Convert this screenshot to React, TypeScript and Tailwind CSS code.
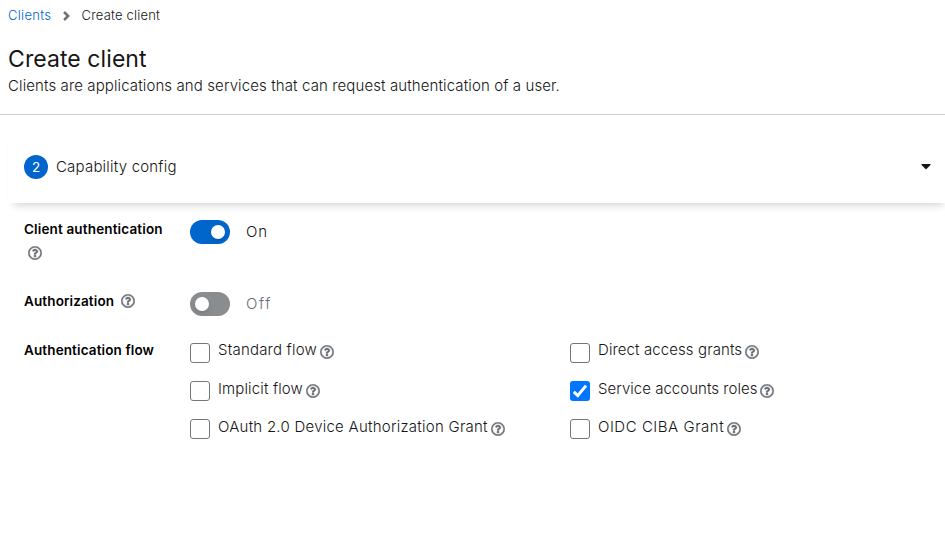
import { FaAngleRight, FaCaretDown, FaRegQuestionCircle } from "react-icons/fa";

function Help({ className = "" }: { className?: string }) {
  return (
    <FaRegQuestionCircle
      className={`block h-3.5 w-3.5 shrink-0 stroke-[#6a6e73] stroke-[14] text-[#6a6e73] ${className}`}
    />
  );
}

function Toggle({ on }: { on: boolean }) {
  return (
    <span
      className={`flex h-6 w-10 items-center rounded-full px-[5px] ${
        on ? "justify-end bg-[#0066cc]" : "justify-start bg-[#8a8d90]"
      }`}
    >
      <span className="h-3.5 w-3.5 rounded-full bg-white shadow-md" />
    </span>
  );
}

type OptionProps = { label: string; tracking: string; offset?: string; checked?: boolean };

function Option({ label, tracking, offset = "pt-px", checked = false }: OptionProps) {
  return (
    <label className="flex h-[38px] items-start">
      <span
        className={`mt-0.5 flex h-5 w-5 shrink-0 items-center justify-center rounded-[3px] ${
          checked ? "bg-[#0075ff]" : "border border-[#767676] bg-white"
        }`}
      >
        {checked && (
          <svg viewBox="0 0 20 20" className="h-5 w-5" fill="none" stroke="white" strokeWidth="3">
            <path d="M3.8 10.8 7.8 14.6 16 4.6" />
          </svg>
        )}
      </span>
      <span className={`ml-2 flex items-start ${offset}`}>
        <span className={`whitespace-nowrap text-[15px] leading-[18px] ${tracking}`}>{label}</span>
        <Help className="ml-[3px] mt-1" />
      </span>
    </label>
  );
}

export default function App() {
  return (
    <main className="h-[533px] w-full overflow-hidden bg-white font-['Inter',sans-serif] font-light text-[#151515]">
      <header className="h-[115px] border-b border-[#d2d2d2] pl-2 pt-[5px]">
        <nav className="flex h-[21px] items-center text-[13px] font-[350] leading-[21px] tracking-[0.2px]">
          <a className="w-[54.5px] tracking-[0.3px] text-[#0066cc]">Clients</a>
          <FaAngleRight className="mr-[12px] h-3.5 w-[7px] stroke-[#6a6e73] stroke-[20] text-[#6a6e73]" />
          <span>Create client</span>
        </nav>
        <h1 className="mt-[17px] h-[31px] text-[23px] font-normal leading-[33px] tracking-[0.08px]">Create client</h1>
        <p className="h-6 text-[15px] leading-6 tracking-[0.11px]">
          Clients are applications and services that can request authentication of a user.
        </p>
      </header>

      <section className="-mr-1 ml-2 mt-[15px] flex h-[73px] items-start bg-white pl-4 pr-[18px] pt-[25px] shadow-[0_8px_8px_-6px_rgba(3,3,3,0.18)]">
        <span className="flex h-6 w-6 items-center justify-center rounded-full bg-[#0066cc] text-[13.5px] font-normal text-white">
          2
        </span>
        <span className="ml-2 text-[15px] leading-6 tracking-[0.2px]">Capability config</span>
        <FaCaretDown className="ml-auto mt-[3px] h-4 w-2.5" />
      </section>

      <form className="pl-6 pt-[17px]">
        <div className="flex h-[72px] items-start">
          <div className="w-[166px] text-[13.5px] font-[570] leading-[19px] tracking-[0.15px] text-black">
            <div>Client authentication</div>
            <Help className="ml-1 mt-[7px]" />
          </div>
          <Toggle on={true} />
          <span className="ml-4 text-[15px] leading-6 tracking-[0.9px]">On</span>
        </div>
        <div className="flex h-[49px] items-start">
          <div className="flex w-[166px] items-start text-[13.5px] font-[570] leading-[19px] tracking-[0.12px] text-black">
            <span className="w-[89px]">Authorization</span>
            <Help className="ml-2 mt-0.5" />
          </div>
          <Toggle on={false} />
          <span className="ml-4 text-[15px] leading-6 tracking-[1.6px] text-[#6a6e73]">Off</span>
        </div>
        <div className="flex items-start">
          <div className="w-[166px] shrink-0 text-[13.5px] font-[570] leading-[19px] tracking-[0.12px] text-black">
            Authentication flow
          </div>
          <div className="grid shrink-0 grid-cols-[380px_375px]">
            <Option label="Standard flow" tracking="tracking-[0.2px]" offset="pt-0" />
            <Option label="Direct access grants" tracking="tracking-[0.1px]" offset="pt-0" />
            <Option label="Implicit flow" tracking="tracking-[0.14px]" />
            <Option label="Service accounts roles" tracking="tracking-[0.03px]" checked />
            <Option label="OAuth 2.0 Device Authorization Grant" tracking="tracking-[0.25px]" />
            <Option label="OIDC CIBA Grant" tracking="tracking-[0.53px]" />
          </div>
        </div>
      </form>
    </main>
  );
}
